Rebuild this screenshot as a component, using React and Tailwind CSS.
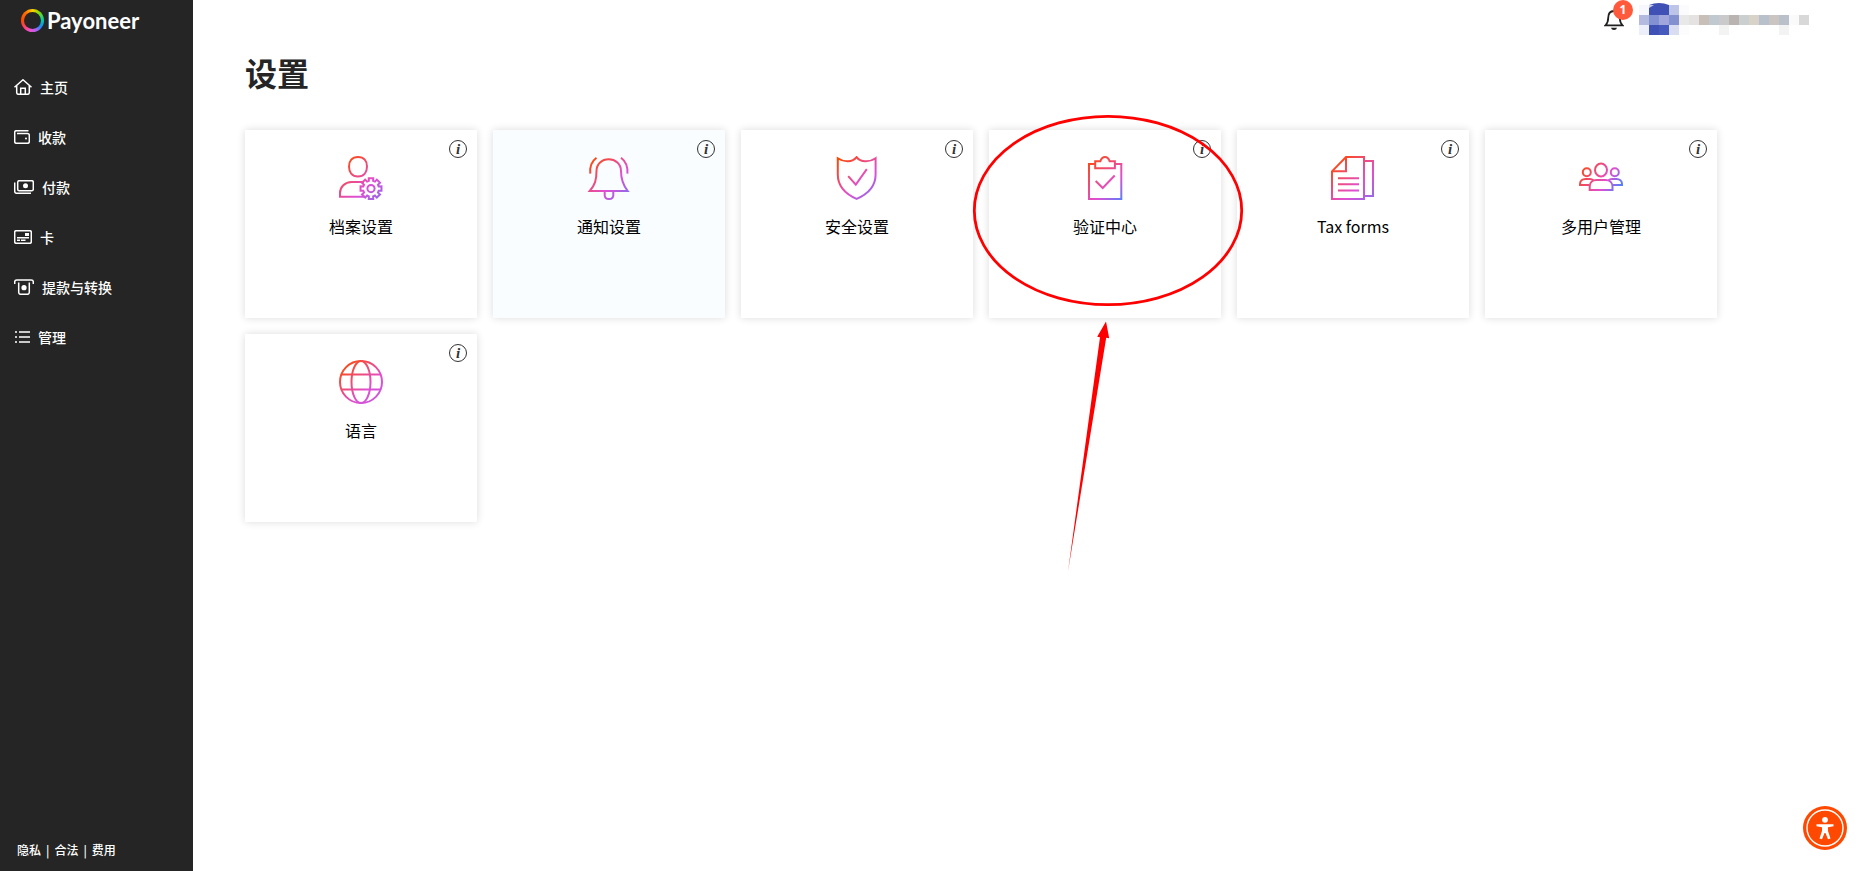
import { useId } from "react";

const gearPath = (cx, cy, outer, inner) => {
  const points = [];
  for (let i = 0; i < 8; i++) {
    const mid = (i * Math.PI) / 4;
    [
      [-0.27, inner],
      [-0.21, outer],
      [0.21, outer],
      [0.27, inner],
    ].forEach(([offset, r]) => {
      points.push(
        `${(cx + r * Math.cos(mid + offset)).toFixed(2)} ${(cy + r * Math.sin(mid + offset)).toFixed(2)}`
      );
    });
  }
  return `M${points.join("L")}Z`;
};

function GradientIcon({ children, end = "#8f6bea", x1 = 4, y1 = 2, x2 = 42, y2 = 44 }) {
  const id = useId();
  return (
    <svg
      className="size-11"
      viewBox="0 0 44 44"
      fill="none"
      stroke={`url(#${id})`}
      strokeWidth="2"
      aria-hidden="true"
    >
      <defs>
        <linearGradient id={id} x1={x1} y1={y1} x2={x2} y2={y2} gradientUnits="userSpaceOnUse">
          <stop offset="0" stopColor="#ff4800" />
          <stop offset="0.65" stopColor="#e04fd2" />
          <stop offset="1" stopColor={end} />
        </linearGradient>
      </defs>
      {children}
    </svg>
  );
}

const ProfileIcon = () => (
  <GradientIcon>
    <path d="M19 1C25 1 28 5 28 10.5S25 20.5 19 20.5S10 16 10 10.5S13 1 19 1Z" />
    <path d="M25.500 40.700H1V37C1 31 6 26 12.500 26H25" />
    <path d={gearPath(32, 32.6, 10.7, 8)} />
    <circle cx="32" cy="32.600" r="3.600" />
  </GradientIcon>
);

const NotificationIcon = () => (
  <GradientIcon x2={40} y2={38}>
    <path d="M2.700 35C8 29 9.500 24 9.500 15C9.500 8 15 3.300 21.700 3.300S34 8 34 15C34 24 36 29 40.700 35Z" />
    <path d="M17.700 35.500V39.200C17.700 41.700 19.500 43 22 43S26.300 41.700 26.300 39.200V35.500" />
    <path d="M9.500 1.700C5 5 2.500 10 3.300 17.700M34 1.700C38.500 5 41 10 40.400 17.700" />
  </GradientIcon>
);

const ShieldIcon = () => (
  <GradientIcon x2={38} y2={40}>
    <path d="M2.800 2.300C9 6.600 17.500 6.500 21.600 1.200C25.500 6.500 34.500 6.600 40.600 2.300V18.500C40.600 30 33 38 21.600 42.900C10.500 38 2.800 30 2.800 18.500Z" />
    <path d="M13.200 20.200L20.800 28.700L31.800 13.200" />
  </GradientIcon>
);

const ClipboardIcon = () => (
  <GradientIcon end="#4885ff">
    <path d="M12 8H6V43H38.300V8H32" />
    <path d="M12.200 12.200V5.300H17.300C18.300 2.500 19.600 1 22 1S25.700 2.500 26.700 5.300H31.900V12.200Z" />
    <path d="M12.700 25L19.700 32L31.700 19.500" />
  </GradientIcon>
);

const FormsIcon = () => (
  <GradientIcon>
    <path d="M15 1H33V43H1V15.300Z" />
    <path d="M15 1V15.300H1M7 22.300H28M7 28.300H28M7 34.500H28M33 5H42V40H33" />
  </GradientIcon>
);

const UsersIcon = () => (
  <GradientIcon end="#3f86ff" x1={0} y1={8} x2={42} y2={34}>
    <ellipse cx="22" cy="14" rx="6" ry="6.400" />
    <circle cx="7.800" cy="16.300" r="4" />
    <circle cx="35.800" cy="16.300" r="4" />
    <path d="M10.700 34V30.500C10.700 26.500 13.500 24 17.500 24H26.500C30.500 24 33.500 26.500 33.500 30.500V34Z" />
    <path d="M10.500 29H1V28C1 25 3.500 23 6.500 23H11C12 23 13.500 23.500 14.500 24.500M33.500 29H43V28C43 25 40.500 23 37.500 23H33C32 23 30.500 23.500 29.500 24.500" />
  </GradientIcon>
);

const GlobeIcon = () => (
  <GradientIcon end="#c059e0">
    <circle cx="22" cy="22" r="21" />
    <ellipse cx="22" cy="22" rx="9.500" ry="21" />
    <path d="M2.500 14.500H41.500M2.500 29.500H41.500" />
  </GradientIcon>
);

const navIcons = {
  home: (
    <svg className="h-4 w-[18px]" viewBox="0 0 18 16" fill="none" stroke="currentColor" strokeWidth="1.500" aria-hidden="true">
      <path d="M.5 8.300L9 .8L17.500 8.300M2.700 6.500V13.500Q2.700 15.300 4.500 15.300H13.500Q15.300 15.300 15.300 13.500V6.500M6.700 15V9.200H11.300V15" />
    </svg>
  ),
  wallet: (
    <svg className="h-[14px] w-4" viewBox="0 0 16 14" fill="none" stroke="currentColor" strokeWidth="1.500" aria-hidden="true">
      <path d="M14.500 .7H2.500Q.7 .7 .7 2.300V11.500Q.7 13.300 2.500 13.300H13.500Q15.300 13.300 15.300 11.500V5.200Q15.300 3.500 13.500 3.500H3" />
      <circle cx="12" cy="8.400" r="1" fill="currentColor" stroke="none" />
    </svg>
  ),
  pay: (
    <svg className="h-[14px] w-5" viewBox="0 0 20 14" fill="none" stroke="currentColor" strokeWidth="1.500" aria-hidden="true">
      <rect x="3.700" y=".7" width="15.600" height="10" rx="1.500" />
      <path d="M.7 2.500V11.300Q.7 13.300 2.700 13.300H17" />
      <circle cx="11.500" cy="5.700" r="2.500" fill="currentColor" stroke="none" />
    </svg>
  ),
  card: (
    <svg className="h-[14px] w-[18px]" viewBox="0 0 18 14" fill="none" stroke="currentColor" strokeWidth="1.500" aria-hidden="true">
      <rect x=".7" y=".7" width="16.600" height="12.600" rx="1.500" />
      <path d="M3 7.700H15M3 10.200H6M7 10.200H11.500" />
      <rect x="11" y="3" width="4" height="3" fill="currentColor" stroke="none" />
    </svg>
  ),
  withdraw: (
    <svg className="h-4 w-5" viewBox="0 0 20 16" fill="none" stroke="currentColor" strokeWidth="1.500" aria-hidden="true">
      <path d="M.7 5V3Q.7 1 2.700 1H17.300Q19.300 1 19.300 3V5M4.700 3.500V13.300Q4.700 15.300 6.500 15.300H13.500Q15.300 15.300 15.300 13.300V3.500" />
      <circle cx="10" cy="8.700" r="2.600" fill="currentColor" stroke="none" />
    </svg>
  ),
  list: (
    <svg className="h-3 w-4" viewBox="0 0 16 12" fill="none" stroke="currentColor" strokeWidth="1.500" aria-hidden="true">
      <path d="M1 1H3M5 1H16M1 6H3M5 6H16M1 11H3M5 11H16" />
    </svg>
  ),
};

const navItems = [
  { icon: "home", label: "主页" },
  { icon: "wallet", label: "收款" },
  { icon: "pay", label: "付款" },
  { icon: "card", label: "卡" },
  { icon: "withdraw", label: "提款与转换" },
  { icon: "list", label: "管理" },
];

const cards = [
  { label: "档案设置", Icon: ProfileIcon },
  { label: "通知设置", Icon: NotificationIcon, active: true },
  { label: "安全设置", Icon: ShieldIcon },
  { label: "验证中心", Icon: ClipboardIcon, marked: true },
  { label: "Tax forms", Icon: FormsIcon },
  { label: "多用户管理", Icon: UsersIcon },
  { label: "语言", Icon: GlobeIcon },
];

function Sidebar() {
  return (
    <aside className="flex w-[193px] shrink-0 flex-col bg-[#252525] text-white">
      <a href="#" className="flex h-[41px] items-center gap-[3px] pl-[21px]">
        <span className="size-[23px] rounded-full bg-[conic-gradient(#ffd000,#7ee000_40deg,#00d0a0_85deg,#1090ff_125deg,#b060f0_160deg,#f050d0_195deg,#ff4060_235deg,#ff4800_270deg,#ff7000_320deg,#ffd000)] p-[3px]">
          <span className="block size-full rounded-full bg-[#252525]" />
        </span>
        <span className="font-['Lato',sans-serif] text-[22px] leading-6 font-bold">Payoneer</span>
      </a>
      <nav className="mt-[21px] flex flex-col">
        {navItems.map(({ icon, label }) => (
          <a key={label} href="#" className="flex h-[50px] items-center gap-2 pl-[14px] text-sm font-medium">
            {navIcons[icon]}
            {label}
          </a>
        ))}
      </nav>
      <div className="mt-auto flex items-center gap-[5px] px-[17px] pb-3 text-xs leading-[18px] font-medium">
        <a href="#">隐私</a>
        <span>|</span>
        <a href="#">合法</a>
        <span>|</span>
        <a href="#">费用</a>
      </div>
    </aside>
  );
}

const mosaic = [
  [0, 1, "#b3b9df"], [1, 1, "#8291d2"], [2, 1, "#a0a6dc"], [3, 1, "#8491d0"],
  [4, 1, "#e8e8e8"], [5, 1, "#e4e3e1"], [6, 1, "#c8bfb9"], [7, 1, "#c0c8d0"],
  [8, 1, "#cacaca"], [9, 1, "#b9b3b2"], [10, 1, "#cacfcf"], [11, 1, "#d8d2c8"],
  [12, 1, "#b8c0cc"], [13, 1, "#cac5c1"], [14, 1, "#b9c0ca"], [15, 1, "#fafafa"],
  [16, 1, "#d8d8d8"], [0, 0, "#f6f8fd"], [1, 0, "#3f51b5"], [2, 0, "#3f51b5"],
  [3, 0, "#bcc4e8"], [4, 0, "#fbfbfd"], [0, 2, "#eceffa"], [1, 2, "#3f51b5"],
  [2, 2, "#4659bc"], [3, 2, "#d8ddf2"], [4, 2, "#fcfcfc"], [8, 2, "#f3f3f3"],
  [14, 2, "#f3f3f3"],
];

function TopBar() {
  return (
    <header className="flex h-[42px] items-start justify-end pr-[54px]">
      <button type="button" aria-label="1" className="relative mt-[9px] mr-[15px] h-[22px] w-5">
        <svg className="h-[22px] w-5" viewBox="0 0 20 22" fill="none" stroke="#1f1f1f" strokeWidth="1.800" aria-hidden="true">
          <path d="M1.500 16.300H18.500C16.700 14.500 15.800 12.500 15.800 9C15.800 4.500 13.500 2 10 2S4.200 4.500 4.200 9C4.200 12.500 3.300 14.500 1.500 16.300Z" />
          <path d="M7 18.700H13Q12.500 21 10 21T7 18.700Z" fill="#1f1f1f" stroke="none" />
        </svg>
        <span className="absolute -top-[9px] left-[9px] flex size-5 items-center justify-center rounded-full bg-[#ff5a3c] font-['Open_Sans',sans-serif] text-xs font-bold text-white">
          1
        </span>
      </button>
      <svg className="mt-[3px] h-8 w-[170px]" viewBox="0 -2 170 32" aria-hidden="true">
        {mosaic.map(([col, row, color]) => (
          <rect key={`${col}-${row}`} x={col * 10} y={row * 10} width="10" height="10" fill={color} shapeRendering="crispEdges" />
        ))}
        <path d="M10 0H30L25 -1.500Q20 -2.500 15 -1.500Z" fill="#3f51b5" />
        <path d="M10 0V3L15 0Z" fill="#c8cfee" />
      </svg>
    </header>
  );
}

function Annotation() {
  return (
    <svg
      className="pointer-events-none absolute top-0 left-0 z-10 h-[188px] w-[232px] overflow-visible"
      viewBox="0 0 232 188"
      aria-hidden="true"
    >
      <ellipse cx="119" cy="80.500" rx="133.700" ry="94.200" fill="none" stroke="#f00" strokeWidth="2.800" />
      <path d="M117 191.500L120.200 208.200L117.200 207.800L79 441.500L111 207.300L108.200 206.700Z" fill="#f00" />
    </svg>
  );
}

function Card({ label, Icon, active, marked }) {
  return (
    <li
      className={`relative h-[188px] shadow-[0_0_8px_rgba(0,0,0,0.14)] ${active ? "bg-[#f9fdff]" : "bg-white"}`}
    >
      <a href="#" className="flex h-full flex-col items-center gap-[14px] pt-[26px] text-base leading-6 text-black">
        <Icon />
        {label}
      </a>
      <button
        type="button"
        aria-label={label}
        className="absolute top-[10px] right-[10px] flex size-[18px] items-center justify-center rounded-full border border-[#333] font-['Liberation_Serif',serif] text-[15px] leading-4 font-bold text-[#333] italic"
      >
        i
      </button>
      {marked && <Annotation />}
    </li>
  );
}

export default function App() {
  return (
    <div className="flex min-h-screen bg-white font-['Noto_Sans_CJK_SC',sans-serif]">
      <Sidebar />
      <div className="flex min-w-0 flex-1 flex-col">
        <TopBar />
        <main className="px-[52px] pb-10">
          <h1 className="mt-[6px] text-[32px] leading-[48px] font-bold text-[#252525]">设置</h1>
          <ul className="mt-[34px] grid grid-cols-[repeat(auto-fill,232px)] gap-4">
            {cards.map((card) => (
              <Card key={card.label} {...card} />
            ))}
          </ul>
        </main>
      </div>
      <button
        type="button"
        aria-label="Accessibility"
        className="fixed right-4 bottom-[21px] size-11 rounded-full"
      >
        <svg className="size-11" viewBox="0 0 44 44" aria-hidden="true">
          <circle cx="22" cy="22" r="22" fill="#ff4800" />
          <circle cx="22" cy="22" r="18" fill="none" stroke="#fff" strokeWidth="1.400" />
          <circle cx="22" cy="13.800" r="2.900" fill="#fff" />
          <path d="M13.500 18.200H30.500V20.300L25 21.300V25L27.500 32.500L25 33.300L22.500 27H21.500L19 33.300L16.500 32.500L19 25V21.300L13.500 20.300Z" fill="#fff" />
        </svg>
      </button>
    </div>
  );
}
